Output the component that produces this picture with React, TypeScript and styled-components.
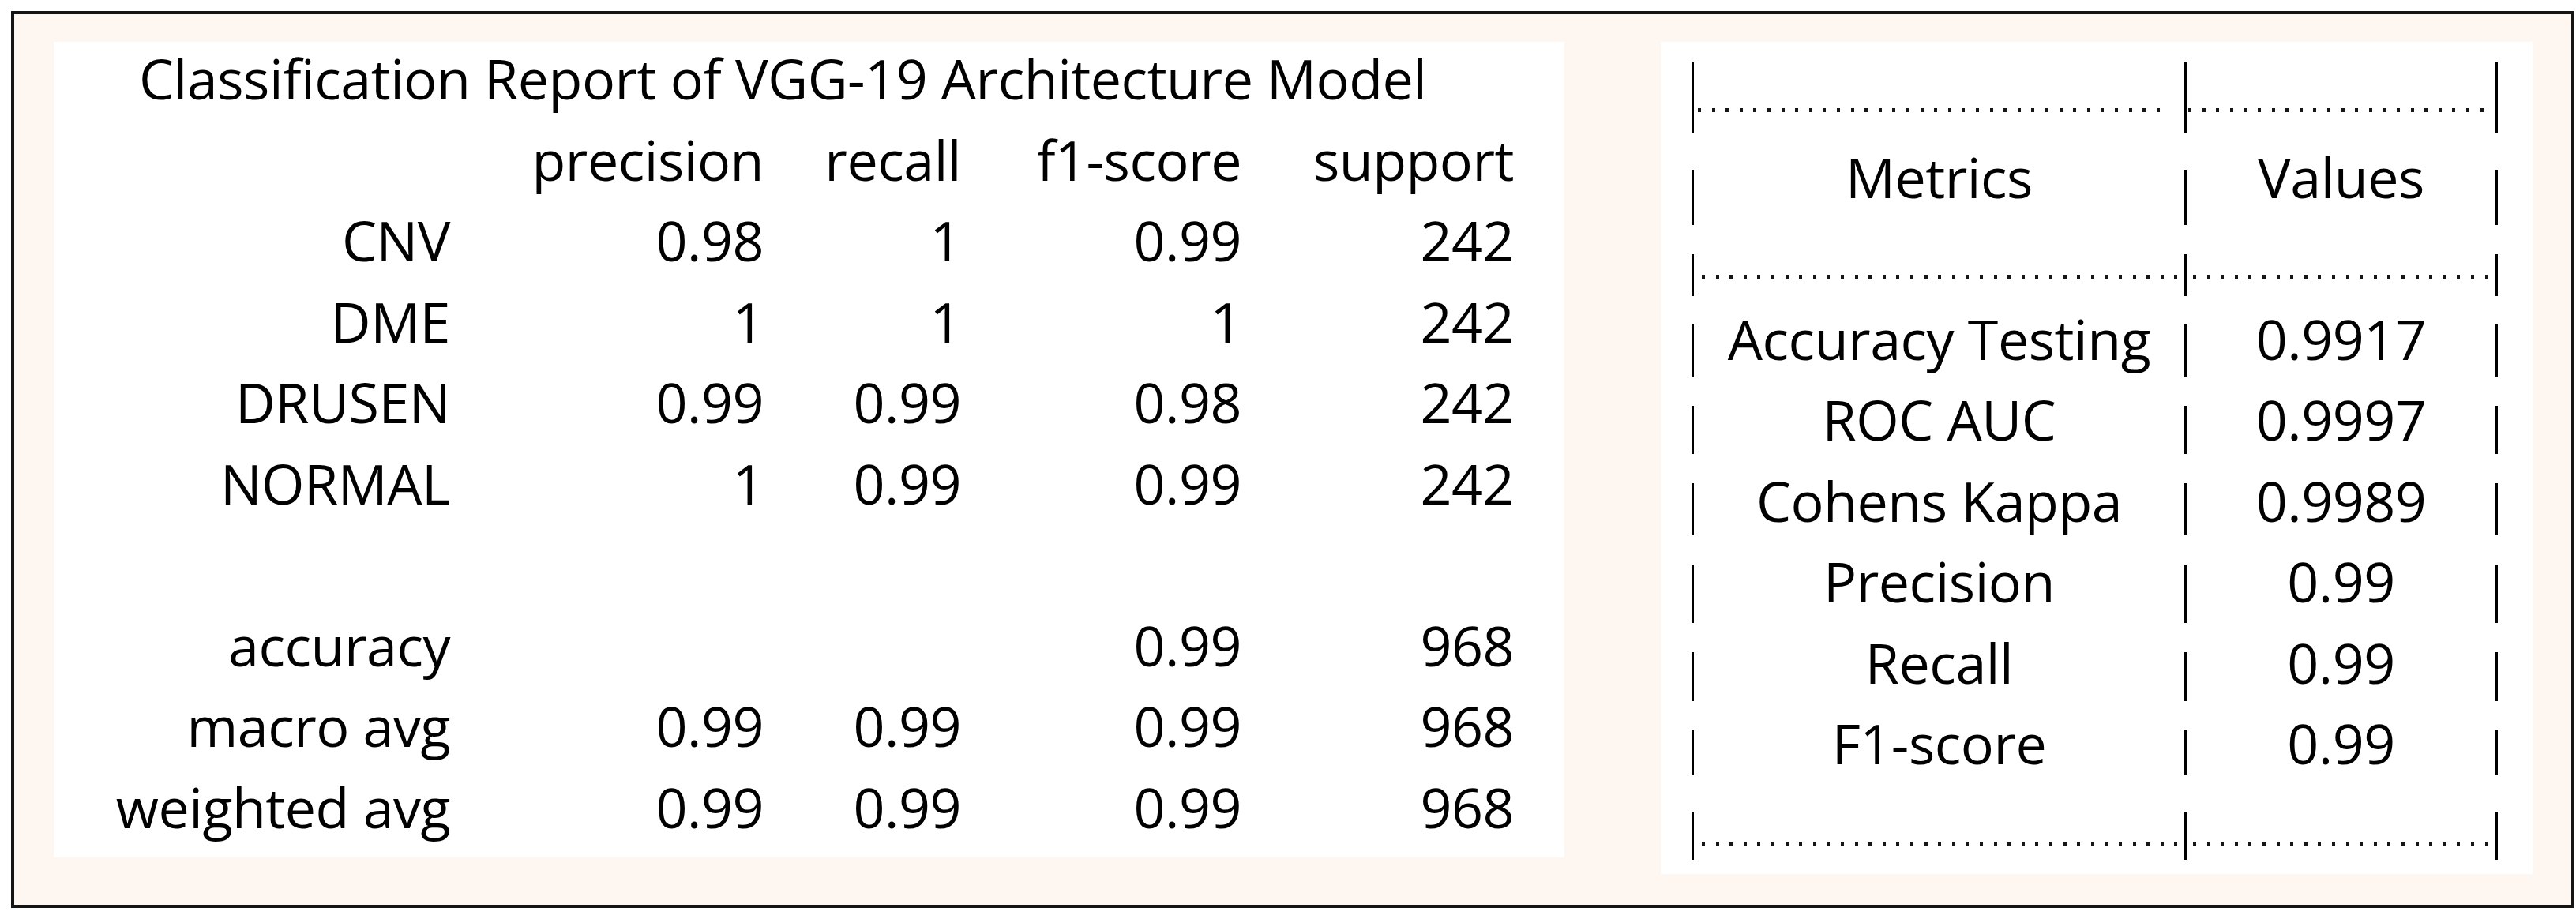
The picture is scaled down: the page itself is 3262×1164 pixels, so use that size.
import React from 'react';
import styled, { createGlobalStyle } from 'styled-components';

const GlobalStyle = createGlobalStyle`
    html,
    body {
        margin: 0;
        padding: 0;
        background: #ffffff;
    }

    body {
        font-family: 'Open Sans', 'Liberation Sans', sans-serif;
        color: #000000;
    }
`;

const Page = styled.div`
    box-sizing: border-box;
    width: 3262px;
    height: 1164px;

    padding: 14px 0 0 14px;
`;

const Frame = styled.div`
    box-sizing: border-box;
    display: flex;
    width: 3246px;
    height: 1136px;

    padding: 35px 49px 0 50px;

    background: #fef6f0;
    border: 4px solid #141414;

    justify-content: space-between;
    align-items: flex-start;
`;

const Panel = styled.div<{ $width: number; $height: number; $padTop: number }>`
    box-sizing: border-box;
    width: ${(p) => p.$width}px;
    height: ${(p) => p.$height}px;

    padding-top: ${(p) => p.$padTop}px;

    background: #ffffff;
`;

/* left: classification report */

const ReportGrid = styled.div`
    display: grid;
    grid-template-columns: 504px 397px 250px 355px 345px;
    grid-auto-rows: 102.5px;

    font-size: 70px;
    line-height: 92px;
    letter-spacing: -0.5px;
    white-space: nowrap;
`;

const ReportTitle = styled.div`
    grid-column: 1 / -1;
    padding-left: 108px;
`;

const ReportCell = styled.div`
    padding-right: 2px;
    text-align: right;
`;

const BlankRow = styled.div`
    grid-column: 1 / -1;
`;

/* right: metrics table */

const MetricsTable = styled.div`
    display: flex;
    flex-direction: column;

    padding-left: 39px;

    font-size: 70px;
    line-height: 92px;
    letter-spacing: -0.5px;
    white-space: nowrap;
`;

const MetricsRow = styled.div`
    display: grid;
    grid-template-columns: 3px 621px 3px 391px 3px;
    height: 102.5px;

    align-items: start;
`;

const Bar = styled.div<{ $top: number; $height: number }>`
    width: 3px;
    height: ${(p) => p.$height}px;

    margin-top: ${(p) => p.$top}px;

    background: #000000;
`;

const MetricCell = styled.div`
    text-align: center;
`;

const Dots = styled.div<{ $top: number; $left: number; $right: number }>`
    height: 5px;

    margin: ${(p) => p.$top - 2}px ${(p) => p.$right}px 0 ${(p) => p.$left}px;

    background: repeating-linear-gradient(90deg, #161616 0 4px, transparent 4px 17.6px);
`;

const reportRows = [
    { label: 'CNV', values: ['0.98', '1', '0.99', '242'] },
    { label: 'DME', values: ['1', '1', '1', '242'] },
    { label: 'DRUSEN', values: ['0.99', '0.99', '0.98', '242'] },
    { label: 'NORMAL', values: ['1', '0.99', '0.99', '242'] },
];

const summaryRows = [
    { label: 'accuracy', values: ['', '', '0.99', '968'] },
    { label: 'macro avg', values: ['0.99', '0.99', '0.99', '968'] },
    { label: 'weighted avg', values: ['0.99', '0.99', '0.99', '968'] },
];

type MetricLine = {
    metric?: string;
    value?: string;
    barTop: number;
    barHeight: number;
    dots?: { top: number; first: [number, number]; second: [number, number] };
};

const metricLines: MetricLine[] = [
    { barTop: 4, barHeight: 89, dots: { top: 64, first: [5, 26], second: [2, 6] } },
    { metric: 'Metrics', value: 'Values', barTop: 37, barHeight: 70 },
    { barTop: 42, barHeight: 53, dots: { top: 70, first: [10, 5], second: [8, 6] } },
    { metric: 'Accuracy Testing', value: '0.9917', barTop: 28, barHeight: 67 },
    { metric: 'ROC AUC', value: '0.9997', barTop: 29, barHeight: 61 },
    { metric: 'Cohens Kappa', value: '0.9989', barTop: 24, barHeight: 66 },
    { metric: 'Precision', value: '0.99', barTop: 25, barHeight: 74 },
    { metric: 'Recall', value: '0.99', barTop: 33, barHeight: 62 },
    { metric: 'F1-score', value: '0.99', barTop: 30, barHeight: 57 },
    { barTop: 31, barHeight: 60, dots: { top: 70, first: [10, 5], second: [8, 6] } },
];

const ClassificationReport: React.FC = () => (
    <Panel $width={1913} $height={1033} $padTop={0}>
        <ReportGrid>
            <ReportTitle>Classification Report of VGG-19 Architecture Model</ReportTitle>
            <ReportCell />
            <ReportCell>precision</ReportCell>
            <ReportCell>recall</ReportCell>
            <ReportCell>f1-score</ReportCell>
            <ReportCell>support</ReportCell>
            {reportRows.map((row) => (
                <React.Fragment key={row.label}>
                    <ReportCell>{row.label}</ReportCell>
                    {row.values.map((v, i) => (
                        <ReportCell key={i}>{v}</ReportCell>
                    ))}
                </React.Fragment>
            ))}
            <BlankRow />
            {summaryRows.map((row) => (
                <React.Fragment key={row.label}>
                    <ReportCell>{row.label}</ReportCell>
                    {row.values.map((v, i) => (
                        <ReportCell key={i}>{v}</ReportCell>
                    ))}
                </React.Fragment>
            ))}
        </ReportGrid>
    </Panel>
);

const MetricsPanel: React.FC = () => (
    <Panel $width={1104} $height={1054} $padTop={22}>
        <MetricsTable>
            {metricLines.map((line, idx) => (
                <MetricsRow key={idx}>
                    <Bar $top={line.barTop} $height={line.barHeight} />
                    {line.dots ? (
                        <Dots $top={line.dots.top} $left={line.dots.first[0]} $right={line.dots.first[1]} />
                    ) : (
                        <MetricCell>{line.metric}</MetricCell>
                    )}
                    <Bar $top={line.barTop} $height={line.barHeight} />
                    {line.dots ? (
                        <Dots $top={line.dots.top} $left={line.dots.second[0]} $right={line.dots.second[1]} />
                    ) : (
                        <MetricCell>{line.value}</MetricCell>
                    )}
                    <Bar $top={line.barTop} $height={line.barHeight} />
                </MetricsRow>
            ))}
        </MetricsTable>
    </Panel>
);

const App: React.FC = () => (
    <Page>
        <GlobalStyle />
        <Frame>
            <ClassificationReport />
            <MetricsPanel />
        </Frame>
    </Page>
);

export default App;
